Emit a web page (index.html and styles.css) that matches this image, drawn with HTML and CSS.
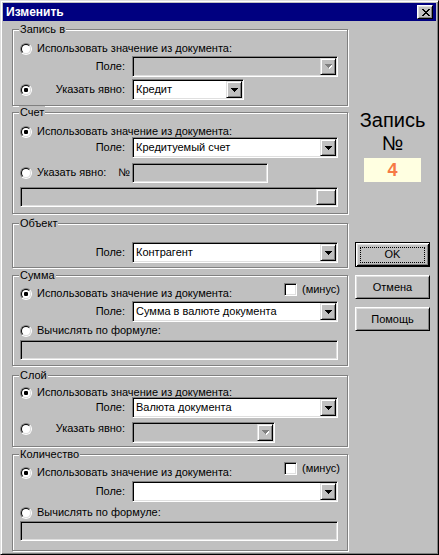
FILE: index.html
```html
<!DOCTYPE html>
<html lang="ru">
<head>
<meta charset="utf-8">
<title>Изменить</title>
<link rel="stylesheet" href="styles.css">
</head>
<body>
<div class="window">
  <div class="titlebar">
    <span class="title">Изменить</span>
    <span class="close"><svg width="8" height="7" viewBox="0 0 8 7" shape-rendering="crispEdges"><path d="M0 0h2v1h-2zM6 0h2v1h-2zM1 1h2v1h-2zM5 1h2v1h-2zM2 2h4v1h-4zM3 3h2v1h-2zM2 4h4v1h-4zM1 5h2v1h-2zM5 5h2v1h-2zM0 6h2v1h-2zM6 6h2v1h-2z" fill="#000"/></svg></span>
  </div>
  <div class="body">
    <div class="left">
      <div class="group g1">
        <div class="legend">Запись в</div>
        <div class="row rrow mt6"><span class="radio"></span><span class="lbl">Использовать значение из документа:</span></div>
        <div class="row frow mt1"><span class="fl">Поле:</span>
          <div class="combo disabled w206"><span class="ctext"></span><span class="dd"><svg width="7" height="5" viewBox="0 0 7 5" shape-rendering="crispEdges"><path d="M1 1h7v1h-1v1h-1v1h-1v1h-1v-1h-1v-1h-1v-1h-1z" fill="#fff"/><path d="M0 0h7v1h-1v1h-1v1h-1v1h-1v-1h-1v-1h-1v-1h-1z" fill="#808080"/></svg></span></div>
        </div>
        <div class="row frow mt2"><span class="fl split"><span class="radio on"></span><span>Указать явно:</span></span>
          <div class="combo w112"><span class="ctext">Кредит</span><span class="dd"><svg width="7" height="4" viewBox="0 0 7 4" shape-rendering="crispEdges"><path d="M0 0h7v1h-1v1h-1v1h-1v1h-1v-1h-1v-1h-1v-1h-1z" fill="#000"/></svg></span></div>
        </div>
      </div>

      <div class="group g2">
        <div class="legend">Счет</div>
        <div class="row rrow mt6"><span class="radio on"></span><span class="lbl">Использовать значение из документа:</span></div>
        <div class="row frow mtm1"><span class="fl">Поле:</span>
          <div class="combo w206"><span class="ctext">Кредитуемый счет</span><span class="dd"><svg width="7" height="4" viewBox="0 0 7 4" shape-rendering="crispEdges"><path d="M0 0h7v1h-1v1h-1v1h-1v1h-1v-1h-1v-1h-1v-1h-1z" fill="#000"/></svg></span></div>
        </div>
        <div class="row frow mt4"><span class="fl split wide"><span class="radiolabel"><span class="radio"></span><span class="lbl">Указать явно:</span></span><span>№</span></span>
          <div class="edit w136"></div>
        </div>
        <div class="row erow mt4">
          <div class="edit browse w318"><span class="ctext"></span><span class="bbtn"></span></div>
        </div>
      </div>

      <div class="group g3">
        <div class="legend">Объект</div>
        <div class="row frow mt12"><span class="fl">Поле:</span>
          <div class="combo w206"><span class="ctext">Контрагент</span><span class="dd"><svg width="7" height="4" viewBox="0 0 7 4" shape-rendering="crispEdges"><path d="M0 0h7v1h-1v1h-1v1h-1v1h-1v-1h-1v-1h-1v-1h-1z" fill="#000"/></svg></span></div>
        </div>
      </div>

      <div class="group g4">
        <div class="legend">Сумма</div>
        <div class="row rrow mt5"><span class="radio on"></span><span class="lbl">Использовать значение из документа:</span>
          <span class="checkgroup"><span class="check"></span><span class="clbl">(минус)</span></span>
        </div>
        <div class="row frow mt1"><span class="fl">Поле:</span>
          <div class="combo w206"><span class="ctext">Сумма в валюте документа</span><span class="dd"><svg width="7" height="4" viewBox="0 0 7 4" shape-rendering="crispEdges"><path d="M0 0h7v1h-1v1h-1v1h-1v1h-1v-1h-1v-1h-1v-1h-1z" fill="#000"/></svg></span></div>
        </div>
        <div class="row rrow mt2"><span class="radio"></span><span class="lbl">Вычислять по формуле:</span></div>
        <div class="row erow mt3"><div class="edit w318"></div></div>
      </div>

      <div class="group g5">
        <div class="legend">Слой</div>
        <div class="row rrow mt4"><span class="radio on"></span><span class="lbl">Использовать значение из документа:</span></div>
        <div class="row frow mtm2"><span class="fl">Поле:</span>
          <div class="combo w206"><span class="ctext">Валюта документа</span><span class="dd"><svg width="7" height="4" viewBox="0 0 7 4" shape-rendering="crispEdges"><path d="M0 0h7v1h-1v1h-1v1h-1v1h-1v-1h-1v-1h-1v-1h-1z" fill="#000"/></svg></span></div>
        </div>
        <div class="row frow mt4"><span class="fl split lift"><span class="radio"></span><span>Указать явно:</span></span>
          <div class="combo disabled w143"><span class="ctext"></span><span class="dd"><svg width="7" height="5" viewBox="0 0 7 5" shape-rendering="crispEdges"><path d="M1 1h7v1h-1v1h-1v1h-1v1h-1v-1h-1v-1h-1v-1h-1z" fill="#fff"/><path d="M0 0h7v1h-1v1h-1v1h-1v1h-1v-1h-1v-1h-1v-1h-1z" fill="#808080"/></svg></span></div>
        </div>
      </div>

      <div class="group g6">
        <div class="legend">Количество</div>
        <div class="row rrow mt5"><span class="radio on"></span><span class="lbl">Использовать значение из документа:</span>
          <span class="checkgroup"><span class="check"></span><span class="clbl">(минус)</span></span>
        </div>
        <div class="row frow mt2"><span class="fl">Поле:</span>
          <div class="combo w206"><span class="ctext"></span><span class="dd"><svg width="7" height="4" viewBox="0 0 7 4" shape-rendering="crispEdges"><path d="M0 0h7v1h-1v1h-1v1h-1v1h-1v-1h-1v-1h-1v-1h-1z" fill="#000"/></svg></span></div>
        </div>
        <div class="row rrow mt4"><span class="radio"></span><span class="lbl">Вычислять по формуле:</span></div>
        <div class="row erow mt2"><div class="edit w318"></div></div>
      </div>
    </div>

    <div class="right">
      <div class="rec-title">Запись<br>№</div>
      <div class="rec-num">4</div>
      <div class="btn default"><span class="focus">OK</span></div>
      <div class="btn">Отмена</div>
      <div class="btn">Помощь</div>
    </div>
  </div>
</div>
</body>
</html>
```

FILE: styles.css
```css
html, body {
  margin: 0;
  padding: 0;
  background: #c0c0c0;
}

.window {
  width: 439px;
  height: 555px;
  box-sizing: border-box;
  background: #c0c0c0;
  border: 1px solid;
  border-color: #dfdfdf #000 #000 #dfdfdf;
  box-shadow: inset 1px 1px #fff, inset -1px -1px #808080;
  padding: 2px;
  font: 11px/13px "Liberation Sans", Arial, sans-serif;
  color: #000;
}

.titlebar {
  height: 18px;
  background: #000080;
  display: flex;
  align-items: center;
  justify-content: space-between;
  padding: 0 3px 0 3px;
}

.title {
  color: #fff;
  font-weight: bold;
  font-size: 12px;
}

.close {
  width: 16px;
  height: 14px;
  box-sizing: border-box;
  border: 1px solid;
  border-color: #fff #000 #000 #fff;
  box-shadow: inset 1px 1px #dfdfdf, inset -1px -1px #808080;
  background: #c0c0c0;
  display: flex;
  align-items: center;
  justify-content: center;
  padding-left: 1px;
}

.close svg { display: block; }

.body {
  display: flex;
  padding-left: 9px;
}

.left {
  width: 336px;
  flex: none;
}

.group {
  box-sizing: border-box;
  width: 336px;
  border: 1px solid #808080;
  box-shadow: inset 1px 1px #fff, 1px 1px #fff;
  padding: 0 0 0 7px;
}

.g1 { margin-top: 8px; padding-bottom: 5px; }
.g2 { margin-top: 6px; padding-bottom: 6px; }
.g3 { margin-top: 9px; padding-bottom: 4px; }
.g4 { margin-top: 7px; padding-bottom: 5px; }
.g5 { margin-top: 9px; padding-bottom: 3px; }
.g6 { margin-top: 7px; padding-bottom: 9px; }

.legend {
  width: fit-content;
  height: 13px;
  margin: -7px 0 0 -1px;
  padding: 0 1px;
  background: #c0c0c0;
  white-space: nowrap;
}

.row {
  display: flex;
  align-items: center;
  white-space: nowrap;
}

.rrow { height: 13px; }
.frow { height: 21px; }
.erow { height: 20px; }

.mt1 { margin-top: 1px; }
.mt2 { margin-top: 2px; }
.mt3 { margin-top: 3px; }
.mt4 { margin-top: 4px; }
.mt5 { margin-top: 5px; }
.mt6 { margin-top: 6px; }
.mt12 { margin-top: 12px; }
.mtm1 { margin-top: -1px; }
.mtm2 { margin-top: -2px; }

.radio {
  width: 12px;
  height: 12px;
  box-sizing: border-box;
  border-radius: 50%;
  border: 1px solid;
  border-color: #808080 #fff #fff #808080;
  display: flex;
  align-items: center;
  justify-content: center;
  flex: none;
}

.radio::before {
  content: "";
  width: 10px;
  height: 10px;
  box-sizing: border-box;
  border-radius: 50%;
  border: 1px solid;
  border-color: #000 #dfdfdf #dfdfdf #000;
  background: #fff;
}

.radio.on::before {
  background: radial-gradient(circle at center, #000 0, #000 2px, #fff 2.4px);
}

.lbl { margin-left: 5px; }

.radiolabel {
  display: flex;
  align-items: center;
}

.fl {
  width: 105px;
  margin-right: 7px;
  text-align: right;
  flex: none;
}

.fl.split {
  display: flex;
  align-items: center;
  justify-content: space-between;
}

.fl.wide {
  width: 110px;
  margin-right: 2px;
}

.fl.lift { margin-bottom: 8px; }

.combo, .edit, .check {
  box-sizing: border-box;
  border: 1px solid;
  border-color: #808080 #fff #fff #808080;
  box-shadow: inset 1px 1px #000, inset -1px -1px #dfdfdf;
  flex: none;
}

.combo {
  height: 21px;
  background: #fff;
  display: flex;
  padding: 1px;
}

.combo.disabled { background: #c0c0c0; }

.ctext {
  flex: 1;
  padding-left: 2px;
  line-height: 17px;
  overflow: hidden;
}

.dd, .bbtn {
  width: 16px;
  height: 17px;
  box-sizing: border-box;
  border: 1px solid;
  border-color: #dfdfdf #000 #000 #dfdfdf;
  box-shadow: inset 1px 1px #fff, inset -1px -1px #808080;
  background: #c0c0c0;
  display: flex;
  align-items: center;
  justify-content: center;
  flex: none;
}

.dd svg { display: block; }

.edit {
  height: 20px;
  background: #c0c0c0;
}

.edit.browse {
  display: flex;
  padding: 1px;
}

.bbtn {
  width: 20px;
  height: 16px;
}

.w112 { width: 112px; }
.w136 { width: 136px; }
.w143 { width: 143px; }
.w206 { width: 206px; }
.w318 { width: 318px; }

.checkgroup {
  display: flex;
  align-items: center;
  align-self: flex-start;
  margin: -4px 0 0 auto;
  width: 56px;
  margin-right: 7px;
}

.check {
  width: 13px;
  height: 13px;
  background: #fff;
}

.clbl { margin-left: 5px; }

.right {
  width: 75px;
  margin-left: 7px;
  padding-top: 88px;
  display: flex;
  flex-direction: column;
  align-items: center;
}

.rec-title {
  font-size: 20px;
  line-height: 23px;
  text-align: center;
  white-space: nowrap;
}

.rec-num {
  width: 57px;
  height: 24px;
  margin-top: 3px;
  background: #ffffe1;
  color: #f67a45;
  font-weight: bold;
  font-size: 18px;
  line-height: 24px;
  text-align: center;
}

.btn {
  width: 75px;
  height: 24px;
  box-sizing: border-box;
  border: 1px solid;
  border-color: #fff #000 #000 #fff;
  box-shadow: inset 1px 1px #dfdfdf, inset -1px -1px #808080;
  background: #c0c0c0;
  display: flex;
  align-items: center;
  justify-content: center;
  margin-top: 8px;
}

.btn.default {
  height: 25px;
  margin-top: 60px;
  border-color: #000;
  box-shadow: inset 1px 1px #fff, inset -1px -1px #000, inset 2px 2px #dfdfdf, inset -2px -2px #808080;
}

.focus {
  box-sizing: border-box;
  width: 65px;
  height: 16px;
  border: 1px dotted #000;
  display: flex;
  align-items: center;
  justify-content: center;
}
```
